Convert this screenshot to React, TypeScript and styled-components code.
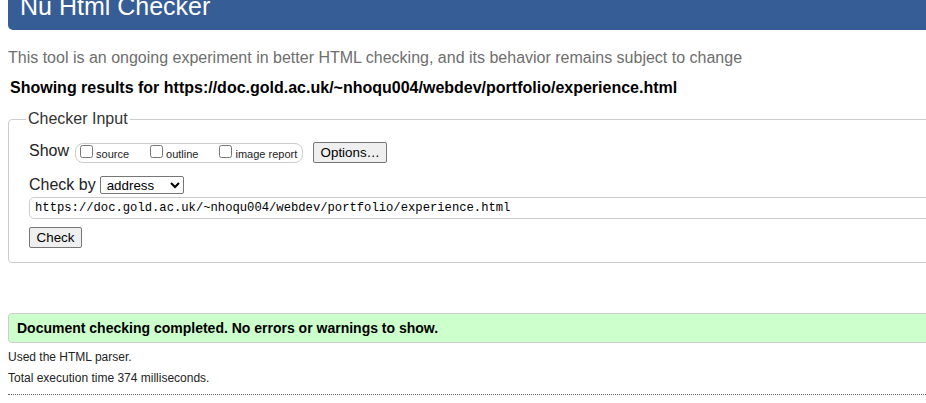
import React from "react";
import styled, { createGlobalStyle } from "styled-components";

const Global = createGlobalStyle`
  html, body { margin: 0; padding: 0; overflow: hidden; background: #fff; }
  body { font-family: "Liberation Sans", Arial, sans-serif; color: #000; }
`;

const Page = styled.div`
  width: 1200px;
  padding-left: 8px;
`;

const Header = styled.h1`
  margin: -16px 0 0;
  padding: 10px 12px 11px;
  background: #365d95;
  color: #fff;
  font-size: 25px;
  font-weight: normal;
  line-height: 25px;
  border-radius: 5px;
`;

const Tagline = styled.p`
  margin: 18px 0 0;
  font-size: 16px;
  line-height: 20px;
  color: #6e6e6e;
`;

const Results = styled.p`
  margin: 10px 0 0 2px;
  font-size: 16px;
  line-height: 20px;
  font-weight: bold;
  color: #000;
`;

const Form = styled.fieldset`
  margin: 12px 0 0;
  padding: 14px 20px 14px 20px;
  border: 1px solid #ccc;
  border-radius: 4px;
  display: flex;
  flex-direction: column;
  align-items: flex-start;
`;

const Legend = styled.legend`
  margin-left: -3px;
  padding: 0 2px;
  font-size: 16px;
  line-height: 18px;
  color: #333;
`;

const Row = styled.div<{ $top?: number }>`
  display: flex;
  align-items: baseline;
  margin-top: ${(p) => p.$top ?? 0}px;
`;

const RowLabel = styled.span`
  font-size: 16px;
  color: #222;
  margin-right: 4px;
`;

const Pill = styled.div`
  display: flex;
  align-items: center;
  height: 18px;
  border: 1px solid #ccc;
  border-radius: 8px;
  padding: 0 5px 0 4px;
  margin-left: 2px;
  gap: 21px;
  align-self: center;
`;

const Check = styled.label`
  font-size: 11px;
  color: #222;
  white-space: nowrap;

  input {
    width: 13px;
    height: 13px;
    margin: 0 3px 0 0;
    vertical-align: baseline;
  }
`;

const Button = styled.button<{ $width: number }>`
  width: ${(p) => p.$width}px;
  height: 21px;
  padding: 0;
  font-family: "Liberation Sans", Arial, sans-serif;
  font-size: 13.33px;
  color: #000;
  background: #efefef;
  border: 1px solid #767676;
  border-radius: 2px;
`;

const OptionsButton = styled(Button)`
  margin-left: 10px;
  align-self: center;
`;

const Select = styled.select`
  width: 84px;
  height: 18px;
  font-family: "Liberation Sans", Arial, sans-serif;
  font-size: 13.33px;
  color: #000;
  background: #fff;
  border: 1px solid #767676;
  border-radius: 2px;
  padding: 0 0 0 2px;
`;

const UrlInput = styled.input`
  box-sizing: border-box;
  width: 1100px;
  height: 22px;
  margin-top: 3px;
  padding: 0 5px;
  font-family: "Liberation Mono", "Courier New", monospace;
  font-size: 12.2px;
  color: #000;
  border: 1px solid #ccc;
  border-radius: 5px;
  outline: none;
`;

const SubmitButton = styled(Button)`
  margin-top: 8px;
`;

const Success = styled.div`
  margin-top: 50px;
  height: 28px;
  border: 1px solid #ccc;
  border-radius: 4px;
  background: #ccffcc;
  padding-left: 8px;
  font-size: 14px;
  line-height: 28px;
  font-weight: bold;
  color: #000;
`;

const Note = styled.p<{ $top: number }>`
  margin: ${(p) => p.$top}px 0 0;
  font-size: 12px;
  line-height: 21px;
  color: #222;
`;

const Footer = styled.div`
  margin-top: 5px;
  border-top: 1px dotted #666;
`;

export default function App() {
  const url = "https://doc.gold.ac.uk/~nhoqu004/webdev/portfolio/experience.html";
  return (
    <Page>
      <Global />
      <Header>Nu Html Checker</Header>
      <Tagline>
        This tool is an ongoing experiment in better HTML checking, and its behavior remains subject to change
      </Tagline>
      <Results>Showing results for {url}</Results>
      <Form>
        <Legend>Checker Input</Legend>
        <Row>
          <RowLabel>Show</RowLabel>
          <Pill>
            <Check>
              <input type="checkbox" />source
            </Check>
            <Check>
              <input type="checkbox" />outline
            </Check>
            <Check>
              <input type="checkbox" />image report
            </Check>
          </Pill>
          <OptionsButton $width={74} type="button">Options…</OptionsButton>
        </Row>
        <Row $top={13}>
          <RowLabel>Check by</RowLabel>
          <Select defaultValue="address">
            <option value="address">address</option>
            <option value="file">file upload</option>
            <option value="text">text input</option>
          </Select>
        </Row>
        <UrlInput type="text" defaultValue={url} readOnly />
        <SubmitButton $width={53} type="button">Check</SubmitButton>
      </Form>
      <Success>Document checking completed. No errors or warnings to show.</Success>
      <Note $top={4}>Used the HTML parser.</Note>
      <Note $top={0}>Total execution time 374 milliseconds.</Note>
      <Footer />
    </Page>
  );
}
